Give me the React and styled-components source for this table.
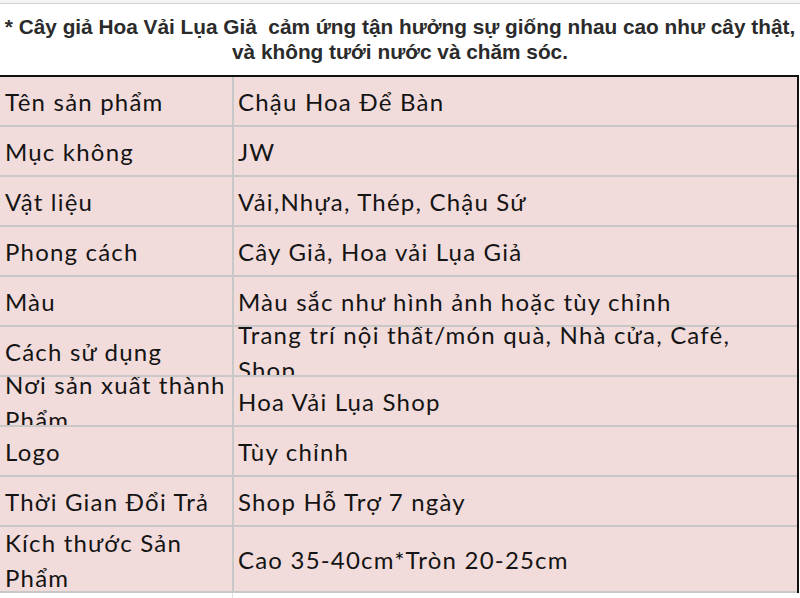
import styled, { createGlobalStyle } from "styled-components";

const rows = [
  ["Tên sản phẩm", "Chậu Hoa Để Bàn"],
  ["Mục không", "JW"],
  ["Vật liệu", "Vải,Nhựa, Thép, Chậu Sứ"],
  ["Phong cách", "Cây Giả, Hoa vải Lụa Giả"],
  ["Màu", "Màu sắc như hình ảnh hoặc tùy chỉnh"],
  ["Cách sử dụng", "Trang trí nội thất/món quà, Nhà cửa, Café, Shop"],
  ["Nơi sản xuất thành Phẩm", "Hoa Vải Lụa Shop"],
  ["Logo", "Tùy chỉnh"],
  ["Thời Gian Đổi Trả", "Shop Hỗ Trợ 7 ngày"],
  ["Kích thước Sản Phẩm", "Cao 35-40cm*Tròn 20-25cm"],
];

export default function App() {
  return (
    <>
      <GlobalStyle />
      <Page>
        <TopStrip />
        <Title>
          <span>* Cây giả Hoa Vải Lụa Giả&nbsp; cảm ứng tận hưởng sự giống nhau cao như cây thật,</span>
          <span>và không tưới nước và chăm sóc.</span>
        </Title>
        <Sheet>
          {rows.map(([label, value], idx) => (
            <Row key={idx} $tall={idx === rows.length - 1}>
              <LabelCell>
                <CellText>{label}</CellText>
              </LabelCell>
              <ValueCell>
                <CellText>{value}</CellText>
              </ValueCell>
            </Row>
          ))}
        </Sheet>
        <Below>
          <Tick />
        </Below>
      </Page>
    </>
  );
}

const GlobalStyle = createGlobalStyle`
  html, body {
    margin: 0;
    padding: 0;
    background: #ffffff;
  }
`;

const Page = styled.div`
  width: 800px;
  height: 598px;
  overflow: hidden;
  background: #ffffff;
  display: flex;
  flex-direction: column;
`;

const TopStrip = styled.div`
  height: 3px;
  background: #f4f4f4;
  border-bottom: 1px solid #d2d2d2;
  flex-shrink: 0;
`;

const Title = styled.div`
  height: 71px;
  flex-shrink: 0;
  display: flex;
  flex-direction: column;
  align-items: center;
  justify-content: center;
  padding-bottom: 2px;
  box-sizing: border-box;
  font-family: "Liberation Sans", Arial, sans-serif;
  font-weight: bold;
  font-size: 20.8px;
  line-height: 25px;
  color: #2b2b2b;
  white-space: nowrap;
`;

const Sheet = styled.div`
  width: 799px;
  border-top: 2px solid #111;
  border-right: 2px solid #111;
  box-sizing: border-box;
  background: #f2dcdb;
  flex-shrink: 0;
`;

const Row = styled.div`
  display: grid;
  grid-template-columns: 234px 1fr;
  height: ${(p) => (p.$tall ? "66px" : "50px")};
  border-bottom: 2px solid #c8c8c8;
  box-sizing: border-box;
`;

const Cell = styled.div`
  display: flex;
  align-items: center;
  overflow: hidden;
  padding: 1px 4px 0 5px;
  box-sizing: border-box;
  font-family: Lato, "Open Sans", sans-serif;
  font-size: 24px;
  letter-spacing: 1.2px;
  line-height: 35px;
  color: #141414;
`;

const LabelCell = styled(Cell)`
  border-right: 2px solid #c8c8c8;
`;

const ValueCell = styled(Cell)`
  padding-left: 4px;
`;

const CellText = styled.div`
  width: 100%;
`;

const Below = styled.div`
  flex: 1;
  display: grid;
  grid-template-columns: 233px 1fr;
`;

const Tick = styled.div`
  border-right: 1px solid #e2e2e2;
`;
